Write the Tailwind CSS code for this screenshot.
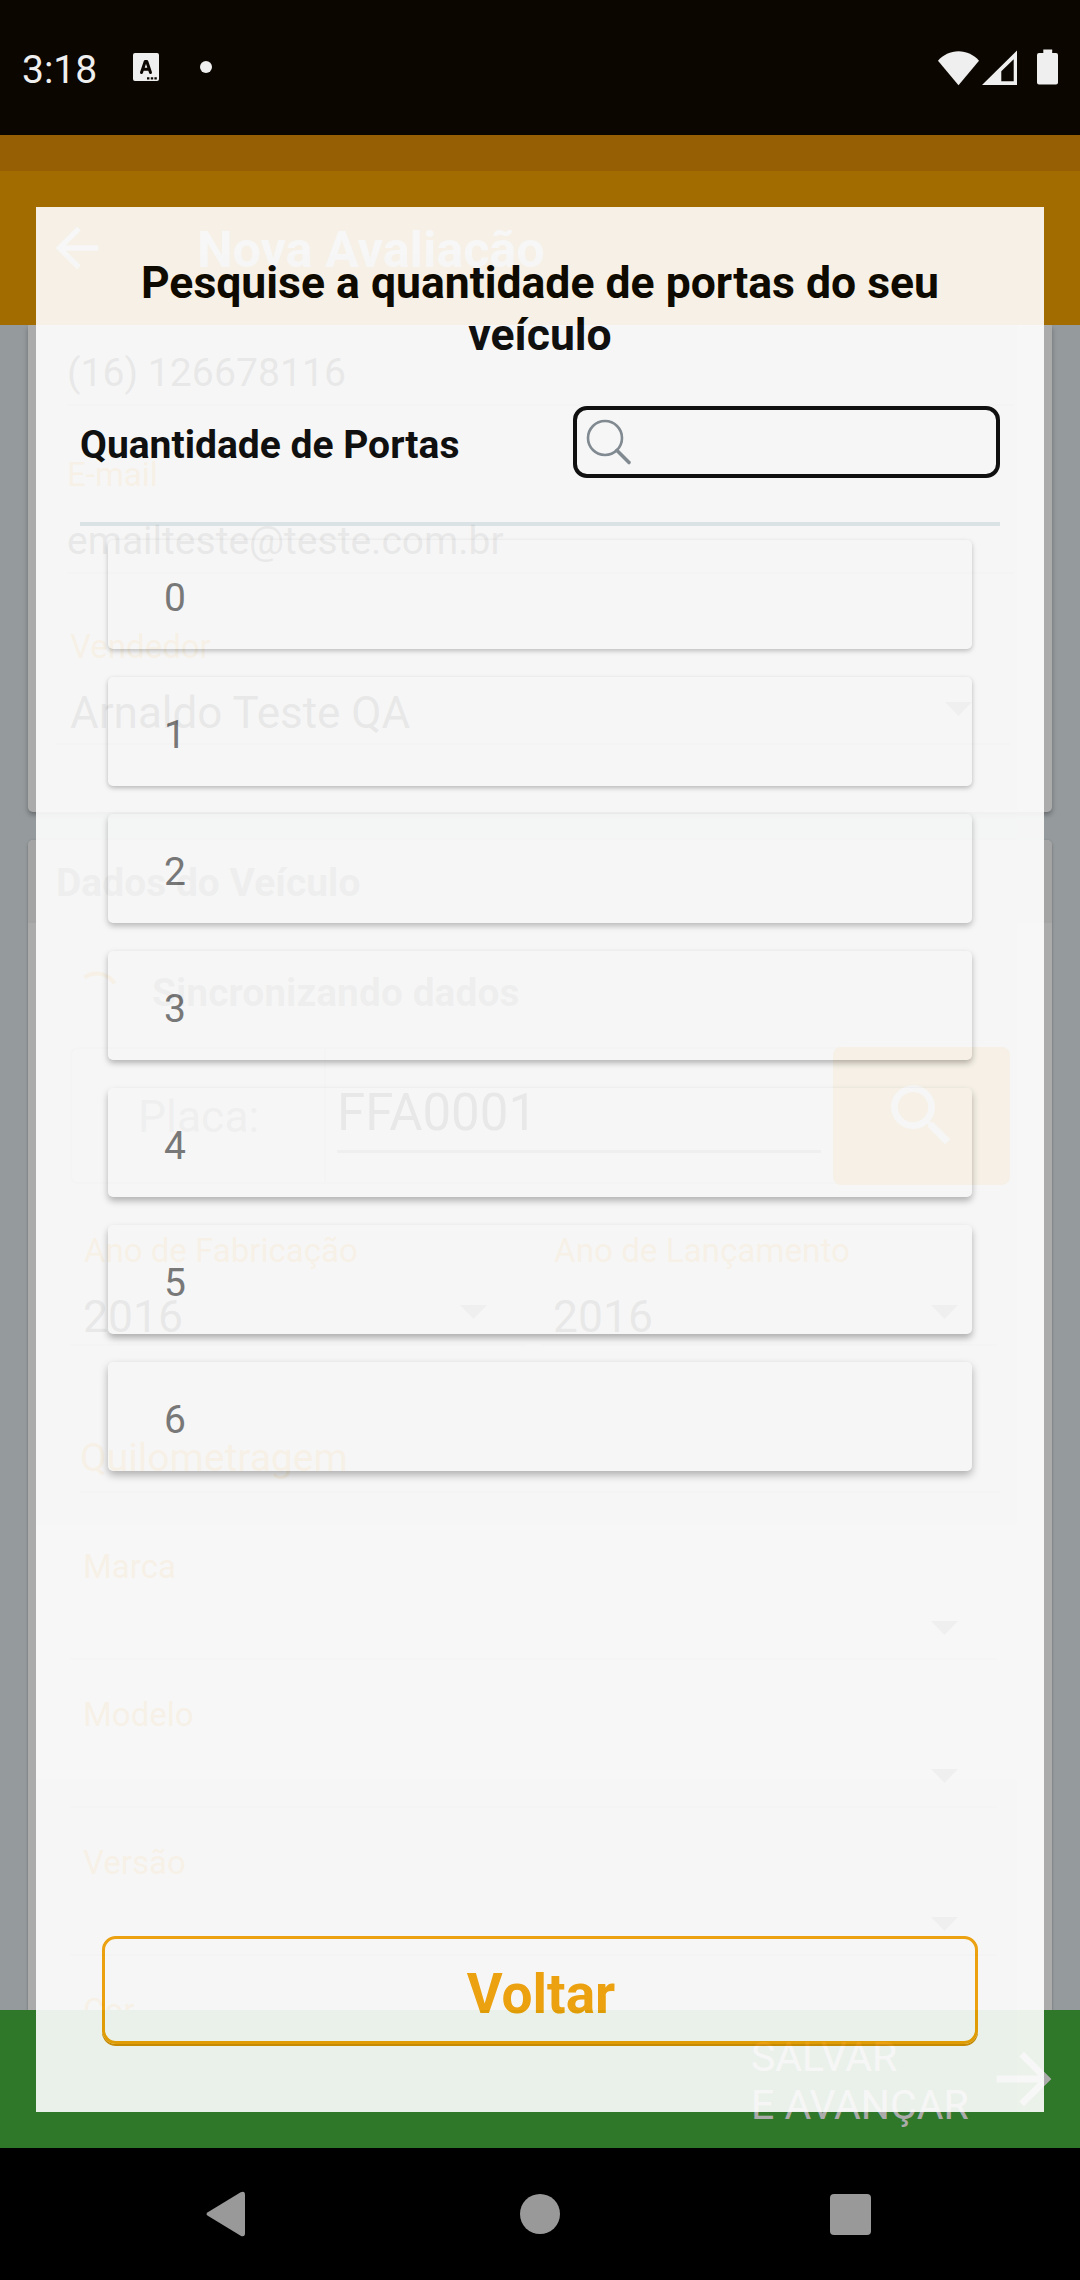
<!DOCTYPE html>
<html lang="pt-BR">
<head>
<meta charset="utf-8">
<title>Nova Avaliação</title>
<script src="https://cdn.jsdelivr.net/npm/@tailwindcss/browser@4"></script>
</head>
<body class="bg-black font-['Roboto',sans-serif]">
<div class="relative flex h-[2280px] w-[1080px] flex-col overflow-hidden bg-black">

  <!-- Status bar -->
  <div class="flex h-[135px] shrink-0 items-start bg-[#0b0600] pl-[22px] pr-[22px] text-[#efefef]">
    <span class="mt-[39px] text-[39px] leading-[62px]">3:18</span>
    <svg class="ml-[36px] mt-[53px] h-[28px] w-[26px]" viewBox="0 0 26 28"><rect width="26" height="28" rx="2" fill="#efefef"/><path d="M8.500 19.500 12.200 8.500h1.600l3.700 11M9.800 16.300h6.400" fill="none" stroke="#0b0600" stroke-width="3" stroke-linecap="round" stroke-linejoin="round"/><path d="M14 24.200h2.400v2.300H14zM17.800 24.200h2.400v2.300h-2.400zM21.400 24.200h2.400v2.300h-2.400z" fill="#0b0600"/></svg>
    <span class="ml-[41px] mt-[61px] size-[12px] rounded-full bg-[#efefef]"></span>
    <svg class="ml-auto mt-[51px] h-[36px] w-[41px]" viewBox="0 0 41 36"><path d="M0 9.700C5 4 12.500 0.300 20.500 0.300S36 4 41 9.700L20.500 34.300z" fill="#efefef"/></svg>
    <svg class="ml-[3px] mt-[50px] h-[36px] w-[35px]" viewBox="0 0 35 36"><path fill-rule="evenodd" d="M35 0.500V35H0zM31.700 9.300 19.300 21.200V31.200H31.700z" fill="#efefef"/></svg>
    <svg class="ml-[20px] mt-[49px] h-[36px] w-[21px]" viewBox="0 0 21 36"><path d="M6.300 0.500h8.900V4H19a2 2 0 0 1 2 2v27.500a2 2 0 0 1-2 2H2a2 2 0 0 1-2-2V6a2 2 0 0 1 2-2h4.300z" fill="#efefef"/></svg>
  </div>

  <!-- Page under the dialog -->
  <div class="h-[36px] shrink-0 bg-[#e08e06]"></div>
  <header class="flex h-[154px] shrink-0 items-center bg-[#f3a100] pl-[45px] text-white">
    <svg class="size-[64px]" viewBox="0 0 24 24" fill="currentColor"><path d="M20 11H7.830l5.590-5.590L12 4l-8 8 8 8 1.410-1.410L7.830 13H20z"/></svg>
    <h1 class="ml-[88px] mt-[4px] text-[50.3px] font-bold leading-[60px]">Nova Avaliação</h1>
  </header>

  <main class="flex h-[1685px] shrink-0 flex-col overflow-hidden bg-[#dee6ea] px-[28px]">
    <section class="h-[487px] shrink-0 rounded-b-[5px] bg-white pl-[39px] pr-[38px] pt-[17px] text-[#222] shadow-[0_3px_5px_rgba(0,0,0,0.3)]">
      <p class="text-[39.2px] leading-[62px]">(16) 126678116</p>
      <div class="h-[2px] bg-[#dedede]"></div>
      <p class="mt-[39px] text-[33px] leading-[60px] text-[#f3a100]">E-mail</p>
      <p class="mt-[5px] text-[39px] leading-[62px]">emailteste@teste.com.br</p>
      <div class="h-[2px] bg-[#dedede]"></div>
      <p class="ml-[3px] mt-[43px] text-[33px] leading-[60px] text-[#f3a100]">Vendedor</p>
      <div class="ml-[3px] mt-[6px] flex items-center justify-between pr-[42px]">
        <p class="text-[44px] leading-[60px]">Arnaldo Teste QA</p>
        <svg class="mb-[9px] h-[14px] w-[27px]" viewBox="0 0 27 14"><path d="M0 0h27L13.500 14z" fill="#8e8e8e"/></svg>
      </div>
      <div class="-ml-[11px] mr-[4px] h-[2px] bg-[#dedede]"></div>
    </section>

    <section class="mt-[28px] flex h-[1300px] shrink-0 flex-col rounded-t-[5px] bg-white text-[#222] shadow-[0_1px_3px_rgba(0,0,0,0.3)]">
      <div class="h-[83px] shrink-0 rounded-t-[5px] bg-[#f5f5f5] pl-[28px]">
        <h2 class="pt-[2px] text-[39px] font-bold leading-[82px] text-[#808080]">Dados do Veículo</h2>
      </div>
      <div class="flex h-[124px] shrink-0 items-center pl-[46px] pt-[15px]">
        <svg class="size-[46px]" viewBox="0 0 46 46"><path d="M10.500 7.300A21 21 0 0 1 40.500 13.500" fill="none" stroke="#f3a100" stroke-width="4"/></svg>
        <p class="ml-[32px] text-[39px] font-bold leading-[60px] text-[#858585]">Sincronizando dados</p>
      </div>
      <div class="mx-[42px] flex h-[137px] shrink-0 rounded-[8px] border-2 border-[#e3e3e3]">
        <div class="flex w-[254px] items-center border-r-2 border-[#e3e3e3] pl-[66px] pt-[4px] text-[44.5px] text-[#8e8e8e]">Placa:</div>
        <div class="ml-[11px] w-[484px] pt-[27px]">
          <p class="text-[51px] leading-[74px]">FFA0001</p>
          <div class="h-[3px] bg-[#8e8e8e]"></div>
        </div>
        <div class="-mr-[2px] -mt-[2px] ml-auto flex h-[138px] w-[177px] items-center justify-center rounded-[8px] bg-[#f3a100]">
          <svg class="-mt-[1px] size-[81px]" viewBox="0 0 24 24" fill="#fff"><path d="M15.500 14h-.790l-.280-.270C15.410 12.590 16 11.110 16 9.500 16 5.910 13.090 3 9.500 3S3 5.910 3 9.500 5.910 16 9.500 16c1.610 0 3.090-.590 4.230-1.570l.270.280v.790l5 4.990L20.490 19zM9.500 14C7.010 14 5 11.990 5 9.500S7.010 5 9.500 5 14 7.010 14 9.500 11.990 14 9.500 14"/></svg>
        </div>
      </div>
      <div class="ml-[42px] mr-[55px] mt-[37px] flex shrink-0 gap-[15px]">
        <div class="w-[456px]">
          <p class="pl-[14px] text-[33px] leading-[60px] text-[#f3a100]">Ano de Fabricação</p>
          <div class="mt-[9px] flex items-center justify-between pl-[13px] pr-[39px]">
            <p class="text-[44.5px] leading-[54px]">2016</p>
            <svg class="mb-[10px] h-[14px] w-[27px]" viewBox="0 0 27 14"><path d="M0 0h27L13.500 14z" fill="#8e8e8e"/></svg>
          </div>
          <div class="h-[2px] bg-[#dedede]"></div>
        </div>
        <div class="w-[456px]">
          <p class="pl-[13px] text-[33.2px] leading-[60px] text-[#f3a100]">Ano de Lançamento</p>
          <div class="mt-[9px] flex items-center justify-between pl-[12px] pr-[39px]">
            <p class="text-[44.5px] leading-[54px]">2016</p>
            <svg class="mb-[10px] h-[14px] w-[27px]" viewBox="0 0 27 14"><path d="M0 0h27L13.500 14z" fill="#8e8e8e"/></svg>
          </div>
          <div class="h-[2px] bg-[#dedede]"></div>
        </div>
      </div>
      <div class="ml-[52px] mr-[52px] mt-[82px] shrink-0">
        <p class="pb-[2px] text-[39px] leading-[61px] text-[#f3a100]">Quilometragem</p>
        <div class="h-[2px] bg-[#dedede]"></div>
      </div>
      <div class="ml-[42px] mr-[55px] mt-[44px] flex shrink-0 flex-col gap-[25px] text-[33px] text-[#f3a100]">
        <div>
          <p class="pl-[13px] leading-[60px]">Marca</p>
          <div class="flex h-[63px] items-center justify-end border-b-2 border-[#dedede] pr-[39px]"><svg class="h-[14px] w-[27px]" viewBox="0 0 27 14"><path d="M0 0h27L13.500 14z" fill="#8e8e8e"/></svg></div>
        </div>
        <div>
          <p class="pl-[13px] leading-[60px]">Modelo</p>
          <div class="flex h-[63px] items-center justify-end border-b-2 border-[#dedede] pr-[39px]"><svg class="h-[14px] w-[27px]" viewBox="0 0 27 14"><path d="M0 0h27L13.500 14z" fill="#8e8e8e"/></svg></div>
        </div>
        <div>
          <p class="pl-[13px] leading-[60px]">Versão</p>
          <div class="flex h-[63px] items-center justify-end border-b-2 border-[#dedede] pr-[39px]"><svg class="h-[14px] w-[27px]" viewBox="0 0 27 14"><path d="M0 0h27L13.500 14z" fill="#8e8e8e"/></svg></div>
        </div>
        <p class="pl-[13px] leading-[60px]">Cor</p>
      </div>
    </section>
  </main>

  <footer class="flex h-[138px] shrink-0 items-center justify-end bg-[#46b43e] pr-[15px] text-white">
    <p class="w-[232px] pt-[4px] text-[41px] leading-[48px]">SALVAR<br>E AVANÇAR</p>
    <svg class="-mt-[1px] size-[82px]" viewBox="0 0 24 24" fill="currentColor"><path d="m12 4-1.410 1.410L16.170 11H4v2h12.170l-5.580 5.590L12 20l8-8z"/></svg>
  </footer>

  <!-- System navigation -->
  <nav class="flex h-[132px] shrink-0 items-center bg-black text-[#999]">
    <svg class="ml-[206px] h-[46px] w-[39px]" viewBox="0 0 39 46" fill="currentColor"><path d="M1.800 21.200 34.700 1.300Q39 -0.500 39 4V42Q39 46.500 34.700 44.700L1.800 24.800Q-0.800 23 1.800 21.200z"/></svg>
    <span class="ml-[275px] size-[40px] rounded-full bg-[#999]"></span>
    <span class="ml-[270px] size-[41px] rounded-[4px] bg-[#999]"></span>
  </nav>

  <!-- Scrim -->
  <div class="absolute inset-x-0 top-[135px] h-[2013px] bg-black/33"></div>

  <!-- Dialog -->
  <div class="absolute left-[36px] top-[207px] flex h-[1905px] w-[1008px] flex-col bg-white px-[44px] pb-[68px] pt-[50px] text-black opacity-90">
    <h2 class="text-center text-[44.5px] font-bold leading-[52px]">Pesquise a quantidade de portas do seu veículo</h2>
    <div class="mt-[45px] flex items-center justify-between">
      <label class="pt-[6px] text-[39px] font-bold leading-[60px]">Quantidade de Portas</label>
      <div class="flex h-[72px] w-[427px] items-center rounded-[14px] border-4 border-black pl-[9px]">
        <svg class="h-[48px] w-[46px]" viewBox="0 0 46 48" fill="none" stroke="#7c878e"><circle cx="19" cy="20" r="17" stroke-width="2.600"/><path d="m31 32.500 12 12" stroke-width="3.600" stroke-linecap="round"/></svg>
      </div>
    </div>
    <div class="mt-[44px] h-[4px] bg-[#e0e9ec]"></div>
    <ul class="mt-[14px] flex flex-col gap-[28px] px-[28px] text-[39px] text-[#737373]">
      <li class="flex h-[109px] items-center rounded-[5px] bg-white pl-[56px] pt-[7px] shadow-[0_2px_5px_rgba(0,0,0,0.26)]">0</li>
      <li class="flex h-[109px] items-center rounded-[5px] bg-white pl-[56px] pt-[7px] shadow-[0_2px_5px_rgba(0,0,0,0.28)]">1</li>
      <li class="flex h-[109px] items-center rounded-[5px] bg-white pl-[56px] pt-[7px] shadow-[0_3px_6px_rgba(0,0,0,0.28)]">2</li>
      <li class="flex h-[109px] items-center rounded-[5px] bg-white pl-[56px] pt-[7px] shadow-[0_3px_6px_rgba(0,0,0,0.3)]">3</li>
      <li class="flex h-[109px] items-center rounded-[5px] bg-white pl-[56px] pt-[7px] shadow-[0_4px_7px_rgba(0,0,0,0.3)]">4</li>
      <li class="flex h-[109px] items-center rounded-[5px] bg-white pl-[56px] pt-[7px] shadow-[0_4px_7px_rgba(0,0,0,0.32)]">5</li>
      <li class="flex h-[109px] items-center rounded-[5px] bg-white pl-[56px] pt-[7px] shadow-[0_4px_8px_rgba(0,0,0,0.32)]">6</li>
    </ul>
    <button class="mx-[22px] mt-auto flex h-[108px] items-center justify-center rounded-[14px] border-3 border-[#f3a000] pl-[2px] pt-[8px] text-[55px] font-bold text-[#f3a000] shadow-[0_2px_0_#d58c00]">Voltar</button>
  </div>
</div>
</body>
</html>
